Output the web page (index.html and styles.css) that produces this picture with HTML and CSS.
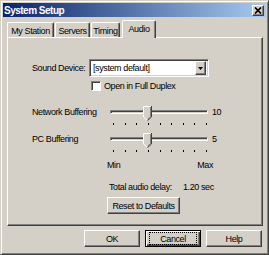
FILE: index.html
```html
<!DOCTYPE html>
<html lang="en">
<head>
    <meta charset="UTF-8">
    <title>System Setup</title>
    <link rel="stylesheet" href="styles.css">
</head>
<body>
    <div class="window">
        <div class="titlebar">
            <span class="title">System Setup</span>
            <span class="close">
                <svg width="8" height="7" viewBox="0 0 8 7"><path d="M1 0.5 L7 6.5 M7 0.5 L1 6.5" stroke="#000" stroke-width="1.7"/></svg>
            </span>
        </div>

        <div class="tabs">
            <div class="tab tab-station">My Station</div>
            <div class="tab tab-servers">Servers</div>
            <div class="tab tab-timing">Timing</div>
            <div class="tab tab-active">Audio</div>
        </div>

        <div class="panel">
            <div class="device-row">
                <span class="device-label">Sound Device:</span>
                <div class="combo">
                    <span class="combo-text">[system default]</span>
                    <span class="combo-btn">
                        <svg width="5" height="3" viewBox="0 0 5 3"><path d="M0 0 H5 L2.5 3 Z" fill="#000"/></svg>
                    </span>
                </div>
            </div>

            <div class="check-row">
                <span class="checkbox"></span>
                <span>Open in Full Duplex</span>
            </div>

            <!-- Network buffering -->
            <div class="slider-row first">
                <span class="slider-label">Network Buffering</span>
                <div class="slider">
                    <div class="track"></div>
                    <svg class="thumb" width="9" height="15" viewBox="0 0 9 15">
                        <path d="M0 0 H9 V11 L4.5 15 L0 11 Z" fill="#d4d0c8"/>
                        <path d="M0.5 11 V0.5 H8" stroke="#fff" fill="none"/>
                        <path d="M0.5 11 L4.2 14.3" stroke="#fff" fill="none"/>
                        <path d="M8.5 0 V11 L4.5 14.6" stroke="#404040" fill="none"/>
                        <path d="M7.5 1 V10.5 L4.5 13.3" stroke="#808080" fill="none"/>
                    </svg>
                </div>
                <span class="slider-value">10</span>
            </div>
            <div class="ticks"><i></i><i></i><i></i><i></i><i></i><i></i><i></i><i></i><i></i></div>

            <!-- PC buffering -->
            <div class="slider-row">
                <span class="slider-label">PC Buffering</span>
                <div class="slider">
                    <div class="track"></div>
                    <svg class="thumb" width="9" height="15" viewBox="0 0 9 15">
                        <path d="M0 0 H9 V11 L4.5 15 L0 11 Z" fill="#d4d0c8"/>
                        <path d="M0.5 11 V0.5 H8" stroke="#fff" fill="none"/>
                        <path d="M0.5 11 L4.2 14.3" stroke="#fff" fill="none"/>
                        <path d="M8.5 0 V11 L4.5 14.6" stroke="#404040" fill="none"/>
                        <path d="M7.5 1 V10.5 L4.5 13.3" stroke="#808080" fill="none"/>
                    </svg>
                </div>
                <span class="slider-value">5</span>
            </div>
            <div class="ticks"><i></i><i></i><i></i><i></i><i></i><i></i><i></i><i></i><i></i></div>

            <div class="minmax">
                <span>Min</span>
                <span>Max</span>
            </div>

            <div class="delay">
                <span class="delay-label">Total audio delay:</span>
                <span>1.20 sec</span>
            </div>

            <button class="btn reset">Reset to Defaults</button>
        </div>

        <div class="buttons">
            <button class="btn">OK</button>
            <button class="btn btn-default"><span class="focus">Cancel</span></button>
            <button class="btn">Help</button>
        </div>
    </div>
</body>
</html>
```

FILE: styles.css
```css
* {
    box-sizing: border-box;
}
body {
    margin: 0;
    font-family: "Liberation Sans", Arial, sans-serif;
    font-size: 9px;
    letter-spacing: -0.4px;
    color: #000;
    background: #d4d0c8;
}
.window {
    width: 269px;
    height: 255px;
    background: #d4d0c8;
    border: 1px solid;
    border-color: #d4d0c8 #404040 #404040 #d4d0c8;
    box-shadow: inset 1px 1px #fff, inset -1px -1px #808080;
    padding: 2px;
}
.titlebar {
    height: 14px;
    display: flex;
    align-items: center;
    justify-content: space-between;
    padding: 0 2px 0 1px;
    background: linear-gradient(to right, #0a246a, #a6caf0);
}
.title {
    color: #fff;
    font-weight: bold;
    font-size: 10px;
    letter-spacing: -0.5px;
}
.close {
    width: 12px;
    height: 11px;
    display: flex;
    align-items: center;
    justify-content: center;
    background: #d4d0c8;
    border: 1px solid;
    border-color: #fff #404040 #404040 #fff;
    box-shadow: inset -1px -1px #808080;
}

/* tabs */
.tabs {
    height: 20px;
    display: flex;
    align-items: flex-end;
    padding-left: 4px;
    position: relative;
    z-index: 1;
}
.tab {
    height: 15px;
    display: flex;
    align-items: center;
    justify-content: center;
    border-top: 1px solid #fff;
    border-left: 1px solid #fff;
    border-right: 1px solid #404040;
    box-shadow: inset -1px 0 #808080;
    border-radius: 2px 2px 0 0;
    padding-top: 1px;
}
.tab-station {
    width: 47px;
    margin-right: 1px;
}
.tab-servers {
    width: 35px;
    margin-right: 1px;
}
.tab-timing {
    width: 29px;
    margin-right: 2px;
}
.tab-active {
    width: 34px;
    height: 18px;
    margin-bottom: -1px;
    padding-bottom: 2px;
    background: #d4d0c8;
}

/* page */
.panel {
    margin-left: 4px;
    width: 256px;
    height: 189px;
    border: 1px solid;
    border-color: #fff #404040 #404040 #fff;
    box-shadow: inset -1px -1px #808080;
    padding: 21px 0 0 24px;
}
.device-row {
    display: flex;
    align-items: center;
    height: 18px;
}
.device-label {
    width: 57px;
}
.combo {
    width: 120px;
    height: 18px;
    display: flex;
    align-items: center;
    background: #fff;
    border: 1px solid;
    border-color: #808080 #fff #fff #808080;
    box-shadow: inset 1px 1px #404040, inset -1px -1px #d4d0c8;
    padding: 0 2px 0 3px;
}
.combo-btn {
    margin-left: auto;
    width: 11px;
    height: 14px;
    display: flex;
    align-items: center;
    justify-content: center;
    background: #d4d0c8;
    border: 1px solid;
    border-color: #fff #404040 #404040 #fff;
    box-shadow: inset -1px -1px #808080;
}
.check-row {
    display: flex;
    align-items: center;
    height: 10px;
    margin: 4px 0 0 59px;
}
.checkbox {
    width: 10px;
    height: 10px;
    margin-right: 3px;
    background: #fff;
    border: 1px solid;
    border-color: #808080 #fff #fff #808080;
    box-shadow: inset 1px 1px #404040;
}

/* sliders */
.slider-row {
    display: flex;
    align-items: center;
    height: 16px;
    margin-top: 6px;
}
.slider-row.first {
    margin-top: 13px;
}
.slider-label {
    width: 78px;
}
.slider {
    position: relative;
    width: 98px;
    height: 16px;
}
.track {
    position: absolute;
    left: 0;
    right: 0;
    top: 6px;
    height: 4px;
    border: 1px solid;
    border-color: #808080 #fff #fff #808080;
    box-shadow: inset 1px 1px #404040;
}
.thumb {
    position: absolute;
    left: 33px;
    top: 2px;
}
.slider-value {
    margin-left: 4px;
}
.ticks {
    display: flex;
    justify-content: space-between;
    width: 94px;
    height: 2px;
    margin: 3px 0 0 81px;
}
.ticks i {
    width: 1px;
    height: 2px;
    background: #000;
}
.minmax {
    display: flex;
    justify-content: space-between;
    width: 106px;
    line-height: 10px;
    margin: 8px 0 0 75px;
}
.delay {
    display: flex;
    line-height: 10px;
    margin: 12px 0 0 77px;
}
.delay-label {
    width: 74px;
}

/* buttons */
.btn {
    font: inherit;
    letter-spacing: inherit;
    color: #000;
    height: 17px;
    padding: 0;
    background: #d4d0c8;
    border: 1px solid;
    border-color: #fff #404040 #404040 #fff;
    box-shadow: inset -1px -1px #808080;
    display: flex;
    align-items: center;
    justify-content: center;
}
.reset {
    width: 73px;
    margin: 5px 0 0 75px;
}
.buttons {
    display: flex;
    justify-content: flex-end;
    gap: 5px;
    margin-top: 4px;
    padding-right: 4px;
}
.buttons .btn {
    width: 56px;
}
.btn-default {
    border: 1px solid #000;
    box-shadow: inset 1px 1px #fff, inset -1px -1px #404040, inset -2px -2px #808080;
}
.focus {
    display: flex;
    align-items: center;
    justify-content: center;
    width: 46px;
    height: 11px;
    outline: 1px dotted #000;
}
```
